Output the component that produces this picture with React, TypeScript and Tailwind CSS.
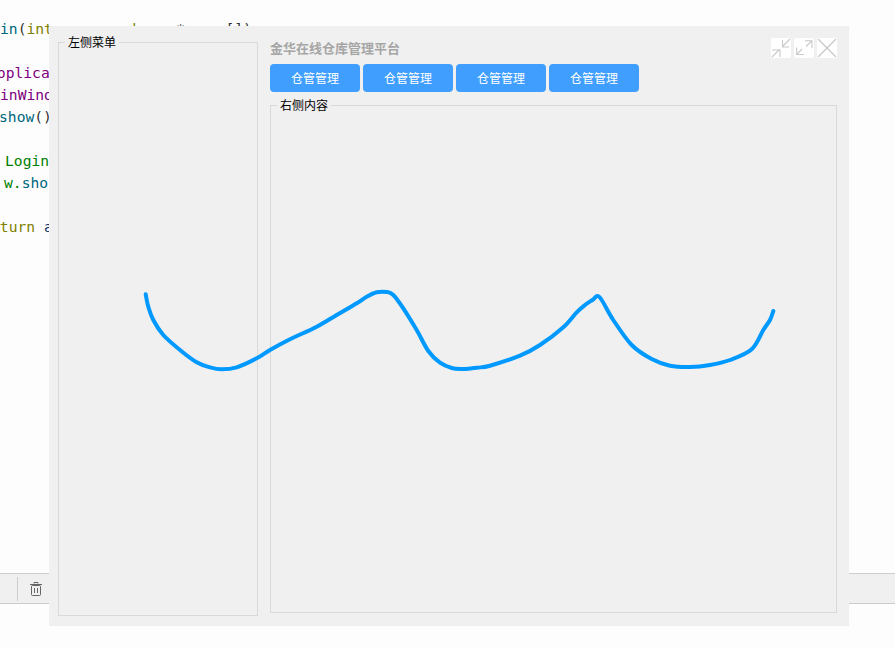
const CJK = "font-['Microsoft_YaHei','Noto_Sans_CJK_SC',sans-serif]";

const points: [number, number][] = [
  [145.7, 294.3], [148.3, 306.7], [153.3, 320], [163.3, 335], [180, 350], [196.7, 362.3], [210, 367.3], [221.7, 369.3],
  [236.7, 367.3], [256.7, 358.3], [270, 350], [290, 339.3], [316.7, 326.7], [336.7, 315], [356.7, 303.3], [366.7, 296.7],
  [376.7, 292.3], [386.7, 292], [393.3, 295], [403.3, 308.3], [416.7, 330], [428.3, 351], [440, 362.7], [451.7, 368],
  [462, 369], [476.7, 367.7], [490, 365.7], [520, 355.7], [540, 345], [563.3, 327.3], [576.7, 312.3], [585, 305],
  [593.3, 299.3], [597.3, 296], [601.7, 300], [613.3, 320], [631.7, 345], [651.7, 359], [670, 365.7], [690, 367],
  [710, 365], [730, 360], [751.7, 349.3], [763.3, 330], [770, 320], [773.3, 311],
];

function smooth(p: [number, number][]) {
  let d = `M${p[0][0]} ${p[0][1]}`;
  for (let i = 0; i < p.length - 1; i++) {
    const a = p[Math.max(i - 1, 0)], b = p[i], c = p[i + 1], e = p[Math.min(i + 2, p.length - 1)];
    d += ` C${(b[0] + (c[0] - a[0]) / 6).toFixed(1)} ${(b[1] + (c[1] - a[1]) / 6).toFixed(1)} ${(c[0] - (e[0] - b[0]) / 6).toFixed(1)} ${(c[1] - (e[1] - b[1]) / 6).toFixed(1)} ${c[0]} ${c[1]}`;
  }
  return d;
}

function CodeLine({ children }: { children?: React.ReactNode }) {
  return <div className="h-[22px] leading-[22px] whitespace-pre">{children}</div>;
}

function Group({ title, className }: { title: string; className: string }) {
  return (
    <div className={`relative border border-[#d9d9d9] ${className}`}>
      <span className={`absolute left-[6px] top-[-7px] bg-[#f0f0f0] px-[3px] text-[12px] leading-[12px] text-black ${CJK}`}>{title}</span>
    </div>
  );
}

function Tile({ children, plain }: { children: React.ReactNode; plain?: boolean }) {
  return (
    <div className={`h-5 w-5 bg-white ${plain ? "" : "rounded-[2px]"}`}>
      <svg width="20" height="20" viewBox="0 0 20 20" fill="none" stroke="#c8c8c8" strokeWidth="1.1">{children}</svg>
    </div>
  );
}

export default function App() {
  return (
    <div className="relative flex h-[649px] w-[895px] flex-col overflow-hidden bg-[#fdfdfd]">
      <div className="flex-1 overflow-hidden pt-[18px] font-['DejaVu_Sans_Mono',monospace] text-[14.65px] text-[#333]">
        <CodeLine>
          <span className="text-[#00677c]">in</span>(<span className="text-[#808000]">int</span> argc,  <span className="text-[#808000]">char</span>  *argv<span className="ml-[5px]">[])</span>
        </CodeLine>
        <CodeLine />
        <CodeLine><span className="ml-[-12px] text-[#800080]">Applica</span></CodeLine>
        <CodeLine><span className="text-[#800080]">inWind</span></CodeLine>
        <CodeLine><span className="ml-[-1px] text-[#00677c]">show</span>()</CodeLine>
        <CodeLine />
        <CodeLine><span className="ml-[5px] text-[#008000]">Login</span></CodeLine>
        <CodeLine><span className="ml-[4px] text-[#008000]">w.</span><span className="text-[#00677c]">sho</span></CodeLine>
        <CodeLine />
        <CodeLine><span className="ml-[-9px] text-[#808000]">eturn</span> <span className="text-[#092e64]">a</span></CodeLine>
      </div>

      <div className="mb-[45px] flex h-[31px] items-center border-y border-[#cccccc] bg-[#f0f0f0]">
        <div className="ml-[17px] h-6 w-px bg-[#cccccc]" />
        <svg className="ml-[11px]" width="14" height="16" viewBox="0 0 14 16" fill="none" stroke="#666" strokeWidth="1">
          <path d="M1 3.5h12M5 2.5V1.5h4v1" />
          <rect x="2.5" y="4.5" width="9" height="10" rx="1" />
          <path d="M5.5 7v5M8.5 7v5" />
        </svg>
      </div>

      <div className="absolute left-[49px] top-[26px] flex h-[600px] w-[800px] bg-[#f0f0f0] pb-[10px] pl-[9px] pr-[12px] pt-[12px]">
        <Group title="左侧菜单" className="mt-[4px] h-[574px] w-[200px] shrink-0" />
        <div className="ml-[12px] flex min-w-0 flex-1 flex-col">
          <div className="flex h-5 items-center justify-between">
            <span className={`text-[13px] font-bold text-[#a6a6a6] ${CJK}`}>金华在线仓库管理平台</span>
            <div className="flex gap-[3px]">
              <Tile>
                <path d="M19 1l-7.5 7.5M11.5 2v7H18M1 19l7.5-7.5M1 12h8v7" />
              </Tile>
              <Tile>
                <path d="M18 2.7l-6 5.8M11 2.7h7v7.6M2.7 16.5L8 11M2.7 9.5v7h7" />
              </Tile>
              <Tile plain>
                <path d="M1 1l18 18M19 1L1 19" strokeWidth="1.3" />
              </Tile>
            </div>
          </div>
          <div className="mt-[6px] flex gap-[3px]">
            {[0, 1, 2, 3].map((i) => (
              <button key={i} className={`h-7 w-[90px] rounded-[4px] bg-[#409eff] text-[12px] text-white ${CJK}`}>
                仓管管理
              </button>
            ))}
          </div>
          <Group title="右侧内容" className="mt-[13px] h-[508px] w-[567px]" />
        </div>
      </div>

      <svg className="pointer-events-none absolute left-0 top-0" width="895" height="649" fill="none">
        <path d={smooth(points)} stroke="#0099ff" strokeWidth="4" strokeLinecap="round" strokeLinejoin="round" />
      </svg>
    </div>
  );
}
